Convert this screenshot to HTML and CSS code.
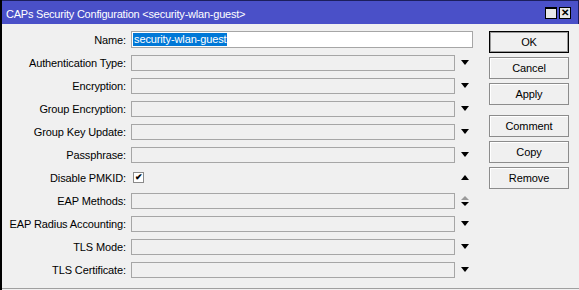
FILE: index.html
```html
<!DOCTYPE html>
<html lang="en">
<head>
  <meta charset="UTF-8"/>
  <title>CAPs Security Configuration</title>
  <meta name="viewport" content="width=device-width, initial-scale=1.0"/>
  <link rel="stylesheet" href="styles.css">
</head>
<body>
  <div class="window">
    <div class="titlebar">
      <span class="title">CAPs Security Configuration &lt;security-wlan-guest&gt;</span>
      <div class="title-btns">
        <span class="tb-max"></span>
        <span class="tb-close">&#x2715;</span>
      </div>
    </div>

    <div class="content">
      <!-- form fields -->
      <div class="form">
        <div class="row">
          <label>Name:</label>
          <div class="field">
            <div class="input white"><span class="sel">security-wlan-guest</span></div>
          </div>
        </div>
        <div class="row">
          <label>Authentication Type:</label>
          <div class="field"><div class="input"></div><span class="arrow-box"><i class="down"></i></span></div>
        </div>
        <div class="row">
          <label>Encryption:</label>
          <div class="field"><div class="input"></div><span class="arrow-box"><i class="down"></i></span></div>
        </div>
        <div class="row">
          <label>Group Encryption:</label>
          <div class="field"><div class="input"></div><span class="arrow-box"><i class="down"></i></span></div>
        </div>
        <div class="row">
          <label>Group Key Update:</label>
          <div class="field"><div class="input"></div><span class="arrow-box"><i class="down"></i></span></div>
        </div>
        <div class="row">
          <label>Passphrase:</label>
          <div class="field"><div class="input"></div><span class="arrow-box"><i class="down"></i></span></div>
        </div>
        <div class="row">
          <label>Disable PMKID:</label>
          <div class="field">
            <div class="check-wrap"><span class="checkbox">&#x2714;</span></div>
            <span class="arrow-box"><i class="up"></i></span>
          </div>
        </div>
        <div class="row">
          <label>EAP Methods:</label>
          <div class="field">
            <div class="input"></div>
            <span class="arrow-box stack"><i class="up gray"></i><i class="down"></i></span>
          </div>
        </div>
        <div class="row">
          <label>EAP Radius Accounting:</label>
          <div class="field"><div class="input"></div><span class="arrow-box"><i class="down"></i></span></div>
        </div>
        <div class="row">
          <label>TLS Mode:</label>
          <div class="field"><div class="input"></div><span class="arrow-box"><i class="down"></i></span></div>
        </div>
        <div class="row">
          <label>TLS Certificate:</label>
          <div class="field"><div class="input"></div><span class="arrow-box"><i class="down"></i></span></div>
        </div>
      </div>

      <!-- dialog buttons -->
      <div class="buttons">
        <button class="default">OK</button>
        <button>Cancel</button>
        <button>Apply</button>
        <button class="spaced">Comment</button>
        <button>Copy</button>
        <button>Remove</button>
      </div>
    </div>

    <div class="statusbar"></div>
  </div>
</body>
</html>
```

FILE: styles.css
```css
body {
  margin: 0;
  font-family: "Liberation Sans", Arial, sans-serif;
  font-size: 11px;
  letter-spacing: -0.12px;
  color: #000;
}
.window {
  width: 579px;
  height: 290px;
  background-color: #f0f0f0;
  border-left: 2px solid #000;
  box-sizing: border-box;
  overflow: hidden;
}
.titlebar {
  height: 24px;
  box-sizing: border-box;
  border-top: 1px solid #1c1f5e;
  background-color: #4a50c8;
  color: #fff;
  display: flex;
  align-items: center;
  justify-content: space-between;
  padding: 3px 7px 0 6px;
  margin-left: -2px;
  border-right: 1px solid #1c1f5e;
}
.title {
  font-size: 11px;
  letter-spacing: -0.22px;
}
.title-btns {
  display: flex;
  gap: 2px;
  margin-top: -2px;
}
.tb-max, .tb-close {
  width: 12px;
  height: 12px;
  box-sizing: border-box;
  border: 1px solid #000;
  background-color: #e8e8e8;
}
.tb-max {
  border-top-width: 2px;
}
.tb-close {
  color: #000;
  font-size: 10px;
  font-weight: bold;
  line-height: 10px;
  text-align: center;
  letter-spacing: 0;
}
.content {
  height: 264px;
  display: flex;
  padding-top: 4px;
  box-sizing: border-box;
}
.form {
  display: flex;
  flex-direction: column;
}
.row {
  height: 23px;
  display: flex;
  align-items: center;
}
.row label {
  width: 124px;
  text-align: right;
  margin-right: 5px;
}
.field {
  width: 342px;
  display: flex;
  align-items: center;
}
.input {
  flex: 1;
  height: 16px;
  box-sizing: border-box;
  border: 1px solid #a6a6a6;
  background-color: #f0f0f0;
}
.input.white {
  height: 17px;
  background-color: #fff;
  display: flex;
  align-items: center;
  padding-left: 1px;
}
.sel {
  background-color: #0078d7;
  color: #fff;
  line-height: 13px;
  padding: 0 1px;
}
.arrow-box {
  width: 18px;
  height: 16px;
  display: flex;
  align-items: center;
  justify-content: center;
}
.arrow-box.stack {
  flex-direction: column;
  gap: 2px;
}
.down, .up {
  width: 0;
  height: 0;
  border-left: 4px solid transparent;
  border-right: 4px solid transparent;
  margin-left: 1px;
}
.down {
  border-top: 5px solid #000;
}
.up {
  border-bottom: 5px solid #000;
}
.stack .down {
  border-top-width: 4px;
}
.stack .up {
  border-bottom-width: 4px;
}
.up.gray {
  border-bottom-color: #9a9a9a;
}
.check-wrap {
  flex: 1;
  height: 16px;
  display: flex;
  align-items: center;
}
.checkbox {
  width: 11px;
  height: 11px;
  box-sizing: border-box;
  margin-left: 2px;
  border: 1px solid #8a8a8a;
  background-color: #fff;
  font-size: 9px;
  font-weight: bold;
  line-height: 9px;
  text-align: center;
  letter-spacing: 0;
}
.buttons {
  display: flex;
  flex-direction: column;
  gap: 4px;
  margin-left: 16px;
  padding-top: 3px;
  width: 80px;
}
button {
  height: 22px;
  font-family: "Liberation Sans", Arial, sans-serif;
  font-size: 11px;
  letter-spacing: -0.1px;
  color: #000;
  background-color: #f0f0f0;
  border: 1px solid #8c8c8c;
  box-shadow: inset 1px 1px 0 #fff;
  padding: 0;
}
button.default {
  border-color: #000;
  box-shadow: inset 0 0 0 1px #9a9a9a;
}
button.spaced {
  margin-top: 6px;
}
.statusbar {
  border-top: 1px solid #a0a0a0;
  height: 2px;
}
```
